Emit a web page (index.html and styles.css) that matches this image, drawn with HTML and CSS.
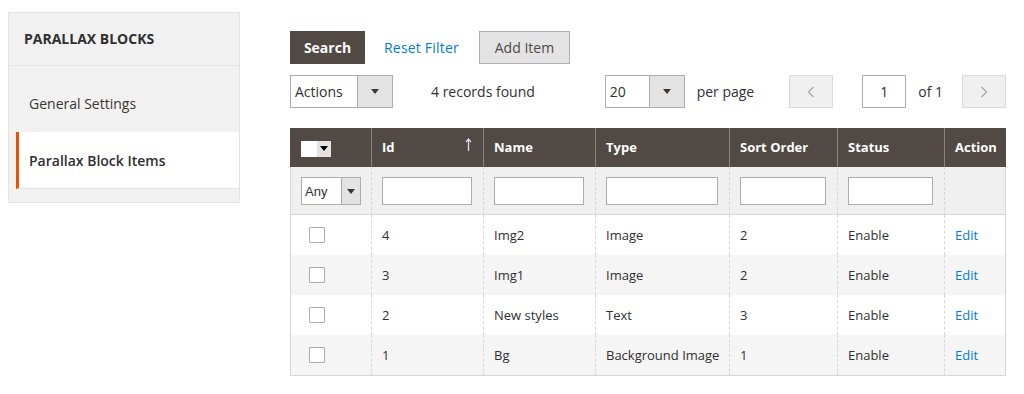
FILE: index.html
```html
<!DOCTYPE html>
<html lang="en">
<head>
<meta charset="utf-8">
<title>Parallax Block Items</title>
<link rel="stylesheet" href="styles.css">
</head>
<body>
<div class="page">
  <aside class="side">
    <div class="side-title">PARALLAX BLOCKS</div>
    <div class="side-item">General Settings</div>
    <div class="side-item active">Parallax Block Items</div>
  </aside>
  <main class="main">
    <div class="actions-row">
      <button class="btn btn-primary">Search</button>
      <a class="link-reset" href="#">Reset Filter</a>
      <button class="btn btn-secondary">Add Item</button>
    </div>
    <div class="toolbar">
      <div class="select sel-actions"><span class="sel-text">Actions</span><span class="sel-btn"><i class="tri"></i></span></div>
      <span class="records">4 records found</span>
      <div class="pager">
        <div class="select sel-limit"><span class="sel-text">20</span><span class="sel-btn"><i class="tri"></i></span></div>
        <span class="per-page">per page</span>
        <button class="pg-btn pg-prev"><svg width="8" height="12" viewBox="0 0 8 12"><polyline points="6.5,1 1.5,6 6.5,11" fill="none" stroke="#a6a6a6" stroke-width="1.2"/></svg></button>
        <span class="pg-input">1</span>
        <span class="of">of 1</span>
        <button class="pg-btn pg-next"><svg width="8" height="12" viewBox="0 0 8 12"><polyline points="1.5,1 6.5,6 1.5,11" fill="none" stroke="#a6a6a6" stroke-width="1.2"/></svg></button>
      </div>
    </div>
    <table class="grid">
      <thead>
        <tr class="head">
          <th class="c-check"><span class="mass"><span class="mass-box"></span><span class="mass-btn"><i class="tri tri-dark"></i></span></span></th>
          <th class="c-id"><div class="th-sort"><span>Id</span><svg class="sort-arrow" width="7" height="13" viewBox="0 0 7 13"><line x1="3.5" y1="1.5" x2="3.5" y2="13" stroke="#e0dcf0" stroke-width="1.3"/><polyline points="1,4 3.5,1 6,4" fill="none" stroke="#e0dcf0" stroke-width="1.2"/></svg></div></th>
          <th class="c-name">Name</th>
          <th class="c-type">Type</th>
          <th class="c-sort">Sort Order</th>
          <th class="c-status">Status</th>
          <th class="c-action">Action</th>
        </tr>
        <tr class="filter">
          <td><div class="any-select"><span class="any-text">Any</span><span class="any-btn"><i class="tri"></i></span></div></td>
          <td><span class="f-input"></span></td>
          <td><span class="f-input"></span></td>
          <td><span class="f-input"></span></td>
          <td><span class="f-input"></span></td>
          <td><span class="f-input"></span></td>
          <td></td>
        </tr>
      </thead>
      <tbody>
        <tr>
          <td><span class="cb"></span></td><td>4</td><td>Img2</td><td>Image</td><td>2</td><td>Enable</td><td><a class="edit" href="#">Edit</a></td>
        </tr>
        <tr class="alt">
          <td><span class="cb"></span></td><td>3</td><td>Img1</td><td>Image</td><td>2</td><td>Enable</td><td><a class="edit" href="#">Edit</a></td>
        </tr>
        <tr>
          <td><span class="cb"></span></td><td>2</td><td>New styles</td><td>Text</td><td>3</td><td>Enable</td><td><a class="edit" href="#">Edit</a></td>
        </tr>
        <tr class="alt last">
          <td><span class="cb"></span></td><td>1</td><td>Bg</td><td>Background Image</td><td>1</td><td>Enable</td><td><a class="edit" href="#">Edit</a></td>
        </tr>
      </tbody>
    </table>
  </main>
</div>
</body>
</html>
```

FILE: styles.css
```css
* { box-sizing: border-box; }
html, body { margin: 0; padding: 0; background: #fff; }
body {
  font-family: "Open Sans", "Liberation Sans", Arial, sans-serif;
  color: #303030;
  font-size: 14px;
}
.page {
  display: flex;
  align-items: flex-start;
}

/* Sidebar */
.side {
  margin: 12px 0 0 8px;
  width: 232px;
  background: #f1f1f1;
  border: 1px solid #e3e3e3;
  padding-bottom: 13px;
}
.side-title {
  height: 53px;
  border-bottom: 1px solid #e3e3e3;
  padding-left: 15px;
  padding-bottom: 2px;
  display: flex;
  align-items: center;
  font-weight: 700;
  font-size: 14px;
  color: #303030;
}
.side-item {
  margin-left: 7px;
  border-left: 3px solid transparent;
  padding-left: 10px;
  display: flex;
  align-items: center;
  font-size: 14px;
  color: #41362f;
}
.side-item:not(.active) { height: 66px; padding-top: 8px; }
.side-item.active {
  height: 57px;
  background: #fff;
  border-left-color: #eb5202;
  font-weight: 600;
  color: #303030;
  border-bottom: 1px solid #e3e3e3;
}

/* Main */
.main {
  margin: 31px 0 0 50px;
  width: 716px;
}
.actions-row {
  display: flex;
  align-items: center;
  height: 33px;
}
.btn {
  font-family: inherit;
  font-size: 14px;
  height: 33px;
  border: 1px solid;
  cursor: pointer;
}
.btn-primary {
  background: #514943;
  border-color: #514943;
  color: #fff;
  font-weight: 700;
  width: 75px;
  padding: 0;
}
.btn-secondary {
  background: #e3e3e3;
  border-color: #adadad;
  color: #514943;
  width: 91px;
  padding: 0;
}
.link-reset {
  color: #007bdb;
  text-decoration: none;
  margin: 0 20px 0 19px;
  font-size: 14px;
  letter-spacing: 0.2px;
}

.toolbar {
  margin-top: 11px;
  display: flex;
  align-items: center;
  height: 33px;
}
.select {
  height: 33px;
  border: 1px solid #adadad;
  display: flex;
  align-items: stretch;
  background: #fff;
}
.sel-text {
  flex: 1;
  display: flex;
  align-items: center;
  padding-left: 4px;
  color: #303030;
}
.sel-btn {
  width: 35px;
  border-left: 1px solid #adadad;
  background: #e3e3e3;
  display: flex;
  align-items: center;
  justify-content: center;
}
.tri {
  display: block;
  width: 0;
  height: 0;
  border-left: 4px solid transparent;
  border-right: 4px solid transparent;
  border-top: 5px solid #41362f;
}
.tri-dark { border-top-color: #000; }
.sel-actions { width: 103px; }
.sel-limit { width: 80px; }
.records { margin-left: 38px; }
.pager {
  margin-left: auto;
  display: flex;
  align-items: center;
}
.per-page { margin-left: 12px; }
.pg-btn {
  width: 44px;
  height: 33px;
  background: #f0f0f0;
  border: 1px solid #dadada;
  padding: 0;
  display: flex;
  align-items: center;
  justify-content: center;
}
.pg-prev { margin-left: 35px; }
.pg-next { margin-left: 19px; }
.pg-input {
  margin-left: 29px;
  width: 44px;
  height: 33px;
  border: 1px solid #adadad;
  display: flex;
  align-items: center;
  justify-content: center;
}
.of { margin-left: 12px; }

/* Grid */
.grid {
  margin-top: 20px;
  width: 716px;
  table-layout: fixed;
  border-collapse: separate;
  border-spacing: 0;
  font-size: 13px;
}
.grid th, .grid td {
  padding: 0 10px;
  text-align: left;
  vertical-align: middle;
  white-space: nowrap;
  border-left: 1px dashed #d6d6d6;
}
.grid th:last-child, .grid td:last-child { border-right: 1px solid #d6d6d6; }
.grid th:first-child, .grid td:first-child { border-left: 1px solid #d6d6d6; }
.head { height: 39px; }
.head th {
  background: #514943;
  color: #fff;
  font-weight: 700;
  border-left: 1px solid #8a837f;
  padding-bottom: 1px;
}
.head th:first-child { border-left-color: #514943; }
.head th:last-child { border-right-color: #514943; }
.c-check { width: 81px; }
.c-id { width: 112px; }
.c-name { width: 112px; }
.c-type { width: 134px; }
.c-sort { width: 108px; }
.c-status { width: 107px; }
.c-action { width: 62px; }
.th-sort {
  display: flex;
  justify-content: space-between;
  align-items: center;
  padding-right: 1px;
}
.sort-arrow {
  display: block;
  margin-top: -6px;
}
.mass {
  display: inline-flex;
  vertical-align: middle;
  margin-top: 1px;
}
.mass-box {
  width: 16px;
  height: 16px;
  background: #fff;
}
.mass-btn {
  width: 14px;
  height: 16px;
  background: #e3e3e3;
  display: flex;
  align-items: center;
  justify-content: center;
}

.filter { height: 48px; }
.filter td {
  background: #f0f0f0;
  border-bottom: 1px solid #d6d6d6;
  padding: 0 11px 0 10px;
}
.f-input {
  display: block;
  height: 28px;
  background: #fff;
  border: 1px solid #adadad;
  margin-top: 1px;
}
.any-select {
  display: flex;
  width: 60px;
  height: 28px;
  border: 1px solid #adadad;
  background: #fff;
  margin-top: 1px;
}
.any-text {
  flex: 1;
  font-family: "Liberation Sans", Arial, sans-serif;
  font-size: 13px;
  padding-left: 3px;
  display: flex;
  align-items: center;
  color: #303030;
}
.any-btn {
  width: 19px;
  border-left: 1px solid #adadad;
  background: #e3e3e3;
  display: flex;
  align-items: center;
  justify-content: center;
}

tbody tr { height: 40px; }
tbody td { padding-bottom: 3px; color: #303030; }
tbody tr.alt td { background: #f5f5f5; }
tbody tr.last td { border-bottom: 1px solid #d6d6d6; }
tbody tr.last { height: 41px; }
.cb {
  display: block;
  width: 16px;
  height: 16px;
  margin-left: 8px;
  border: 1px solid #adadad;
  border-radius: 1px;
  background: #fff;
}
.edit {
  color: #007bdb;
  text-decoration: none;
}
```
